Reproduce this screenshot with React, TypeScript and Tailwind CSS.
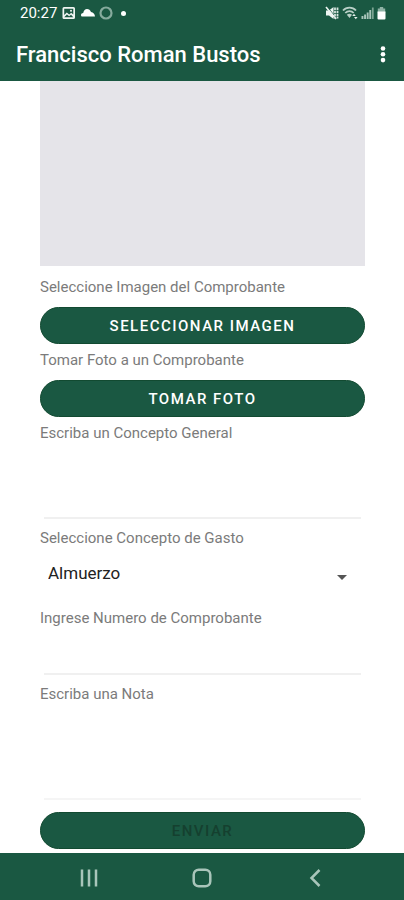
import type { ReactNode } from 'react'

function StatusBar() {
  return (
    <div className="flex h-[26px] items-center justify-between pl-5 pr-[18px]">
      <div className="flex items-center">
        <span className="w-[38px] text-[15px] leading-5">20:27</span>
        <svg className="ml-1 h-3 w-[14px]" viewBox="0 0 14 12" aria-hidden="true">
          <path
            fillRule="evenodd"
            fill="#eef5f2"
            d="M2 0h9.500a1.500 1.500 0 0 1 1.500 1.500v9a1.500 1.500 0 0 1-1.500 1.500H2a1.500 1.500 0 0 1-1.500-1.500v-9A1.500 1.500 0 0 1 2 0zM2.200 1.800v6.200l2.600-2.500 2.400 2 2-1.700 2.100 1.700V1.800zM2.200 10.200h9.100L9 7.800 7.200 9.300 4.900 7.400z"
          />
          <circle cx="9" cy="3.800" r="1" fill="#eef5f2" />
        </svg>
        <svg className="ml-[5px] h-3 w-[14px]" viewBox="0 0 14 12" aria-hidden="true">
          <path fill="#fff" d="M1.500 9.500C.6 9.500 0 9 0 8c0-1.200 1-2 2.200-2C2.800 3.400 4.200 2 6 2c1.900 0 3.300 1 4 3 2.300.2 3.800 2 4 4.500z" />
        </svg>
        <svg className="ml-1 h-[14px] w-[14px]" viewBox="0 0 14 14" aria-hidden="true">
          <circle cx="7" cy="7" r="5.500" fill="none" stroke="#86ab9d" strokeWidth="2.200" />
        </svg>
        <span className="ml-2 h-[5px] w-[5px] rounded-full bg-white" />
      </div>

      <div className="flex items-center gap-[3px]">
        <svg className="h-[14px] w-[14px]" viewBox="0 0 14 14" aria-hidden="true">
          <path fill="#eef5f2" d="M1 4.500h3L8.500 1v12L4 9.500H1z" />
          <path fill="none" stroke="#1a5842" strokeWidth="1" d="M2.500 1.200l7 8.500" />
          <path fill="none" stroke="#eef5f2" strokeWidth="1.600" d="M1 1l10 12" />
          <path fill="none" stroke="#d5e3dd" strokeWidth="1.800" strokeDasharray="2.500 .7" d="M10 1.500v11M12.500 1.500v11" />
        </svg>
        <svg className="h-[14px] w-4" viewBox="0 0 16 14" aria-hidden="true">
          <g fill="none" stroke="#b9d0c7" strokeWidth="1.800">
            <path d="M1 4.500c3.500-3.800 9.500-3.800 13 0" />
            <path d="M3.300 7c2.300-2.400 6.100-2.400 8.400 0" />
          </g>
          <path fill="#b9d0c7" d="M4.800 8.700c1.400-1.200 3.800-1.200 5.200 0L7.500 12z" />
          <path fill="#e3ede9" d="M12 7.800l1.800 2.200h-3.600zM13.800 13.200L12 11h3.600z" />
        </svg>
        <svg className="h-[14px] w-[13px]" viewBox="0 0 13 14" aria-hidden="true">
          <path fill="#a9c5ba" d="M.5 10h1.900v3H.5zM3.100 8.500H5V13H3.100z" />
          <path fill="#a9c5ba" d="M5.700 6.500h1.900V13H5.700zM8.300 4h1.900v9H8.300z" />
          <path fill="#7ba391" d="M10.900 1.500h1.800V13h-1.800z" />
        </svg>
        <svg className="h-[14px] w-[9px]" viewBox="0 0 9 14" aria-hidden="true">
          <path fill="#8fb2a5" d="M2.800 1h3.400v1.500h2V7H.8V2.500h2z" />
          <path fill="#fff" d="M.5 5.500h8v7a1 1 0 0 1-1 1h-6a1 1 0 0 1-1-1z" />
        </svg>
      </div>
    </div>
  )
}

function AppBar() {
  return (
    <header className="bg-[#1a5842] text-white">
      <StatusBar />
      <div className="flex h-[55px] items-center justify-between pt-0.5 pl-4 pr-3">
        <h1 className="text-[22px] leading-7 font-medium">Francisco Roman Bustos</h1>
        <button type="button" aria-label="Más opciones" className="flex h-8 w-[18px] items-center justify-center">
          <svg className="h-5 w-[6px]" viewBox="0 0 6 20" fill="currentColor" aria-hidden="true">
            <circle cx="3" cy="3.500" r="2.300" />
            <circle cx="3" cy="9.300" r="2.300" />
            <circle cx="3" cy="15.100" r="2.300" />
          </svg>
        </button>
      </div>
    </header>
  )
}

function FieldLabel({ htmlFor, children }: { htmlFor: string; children: ReactNode }) {
  return (
    <label htmlFor={htmlFor} className="block text-[15px] leading-5 text-[#7b7b7b]">
      {children}
    </label>
  )
}

const pill =
  'h-[37px] w-full rounded-full border border-[#124a31] bg-[#1a5842] text-[15px] leading-5 font-medium tracking-widest uppercase'

export default function App() {
  return (
    <div className="flex min-h-screen flex-col bg-white font-[Roboto,'Liberation_Sans',sans-serif]">
      <AppBar />

      <main className="grow pr-[39px] pb-1 pl-10">
        <div className="h-[185px] bg-[#e5e4e9]" />

        <form className="pt-[11px]" onSubmit={(e) => e.preventDefault()}>
          <FieldLabel htmlFor="imagen">Seleccione Imagen del Comprobante</FieldLabel>
          <button id="imagen" type="button" className={`${pill} mt-[10px] block text-white`}>
            Seleccionar imagen
          </button>

          <div className="mt-[6px]">
            <FieldLabel htmlFor="foto">Tomar Foto a un Comprobante</FieldLabel>
          </div>
          <button id="foto" type="button" className={`${pill} mt-[10px] block text-white`}>
            Tomar foto
          </button>

          <div className="mt-[6px]">
            <FieldLabel htmlFor="concepto">Escriba un Concepto General</FieldLabel>
            <div className="px-1">
              <textarea
                id="concepto"
                className="block h-[76px] w-full resize-none border-b-2 border-[#f0f0f0] text-base outline-none"
              />
            </div>
          </div>

          <div className="mt-[9px]">
            <FieldLabel htmlFor="gasto">Seleccione Concepto de Gasto</FieldLabel>
            <div className="relative">
              <select
                id="gasto"
                defaultValue="Almuerzo"
                className="block h-[50px] w-full appearance-none bg-transparent px-2 text-[17px] leading-6 text-[#222] outline-none"
              >
                <option>Almuerzo</option>
              </select>
              <svg
                className="pointer-events-none absolute top-[27px] right-[18px] h-[5px] w-[10px]"
                viewBox="0 0 10 5"
                fill="#555"
                aria-hidden="true"
              >
                <path d="M0 0h10L5 5z" />
              </svg>
            </div>
          </div>

          <div className="mt-[10px]">
            <FieldLabel htmlFor="numero">Ingrese Numero de Comprobante</FieldLabel>
            <div className="px-1">
              <input
                id="numero"
                type="text"
                className="block h-[47px] w-full border-b-2 border-[#f0f0f0] text-base outline-none"
              />
            </div>
          </div>

          <div className="mt-[9px]">
            <FieldLabel htmlFor="nota">Escriba una Nota</FieldLabel>
            <div className="px-1">
              <textarea
                id="nota"
                className="block h-[96px] w-full resize-none border-b-2 border-[#f5f5f5] text-base outline-none"
              />
            </div>
          </div>

          <button type="submit" disabled className={`${pill} mt-3 block text-[#15402f]`}>
            Enviar
          </button>
        </form>
      </main>

      <nav className="flex h-[47px] items-center justify-around bg-[#1a5842] px-8 pt-0.5 text-[#a9c5ba]">
        <button type="button" aria-label="Recientes">
          <svg className="h-5 w-5" viewBox="0 0 20 20" fill="none" stroke="currentColor" strokeWidth="2.500" aria-hidden="true">
            <path d="M3 1.500v17M10 1.500v17M17 1.500v17" />
          </svg>
        </button>
        <button type="button" aria-label="Inicio">
          <svg className="h-5 w-5" viewBox="0 0 20 20" fill="none" stroke="currentColor" strokeWidth="2.500" aria-hidden="true">
            <rect x="1.700" y="1.700" width="16.600" height="16.600" rx="5" />
          </svg>
        </button>
        <button type="button" aria-label="Atrás">
          <svg className="h-5 w-5" viewBox="0 0 20 20" fill="none" stroke="currentColor" strokeWidth="2.500" aria-hidden="true">
            <path d="M14.500 2L6.500 10l8 8" />
          </svg>
        </button>
      </nav>
    </div>
  )
}
